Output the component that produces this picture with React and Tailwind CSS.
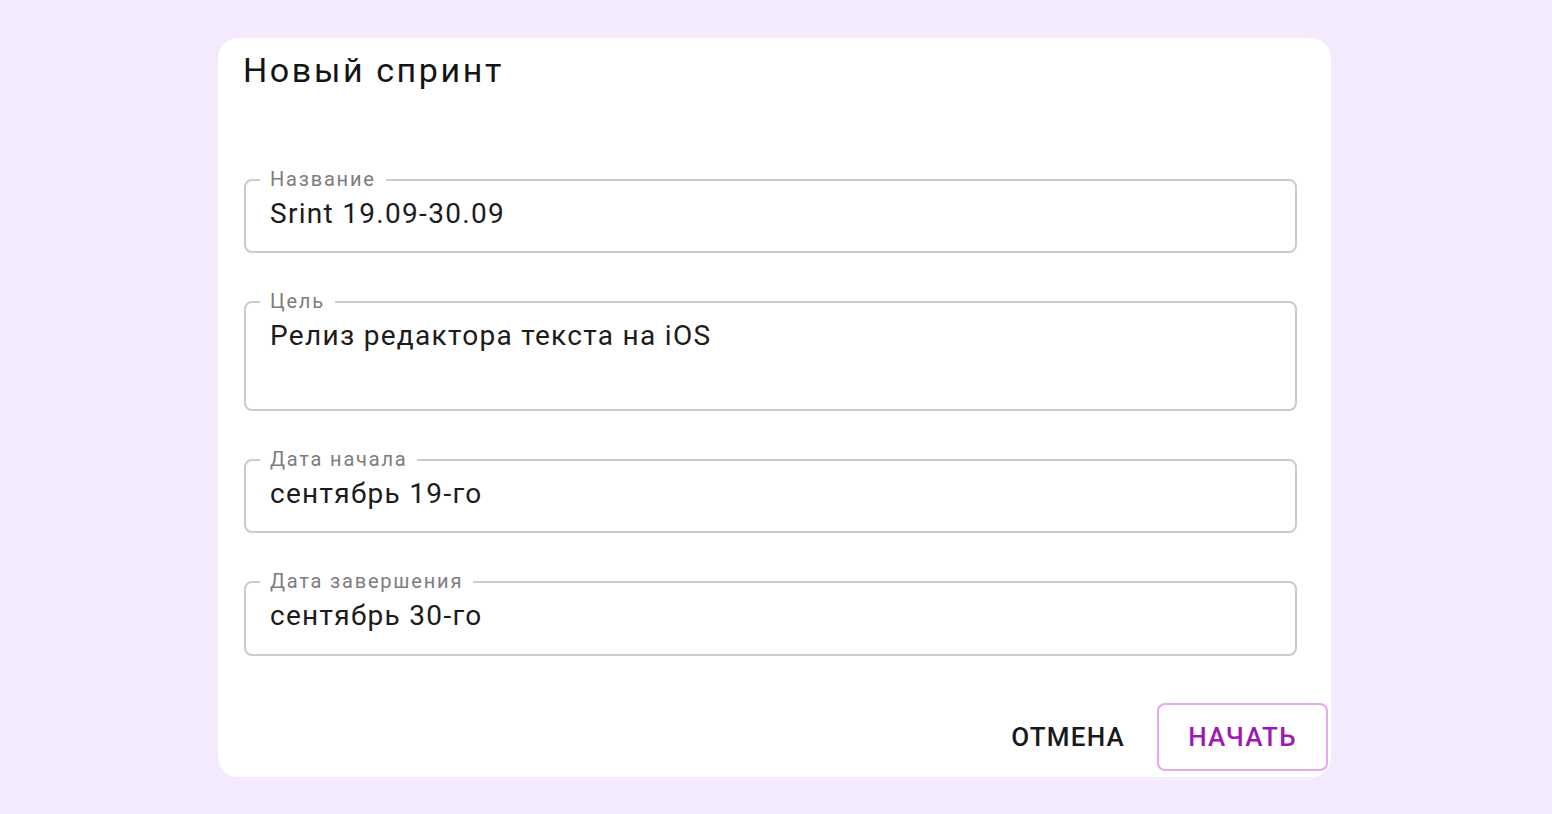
import React from "react";

function Field({ label, value, h = "h-[74px]" }) {
  return (
    <div className={`relative w-[1053px] ${h} rounded-[8px] border-2 border-[#cbcbcb] pl-[24px] pt-[16px]`}>
      <span className="absolute left-[14px] top-[-16px] bg-white px-[10px] text-[20px] leading-[28px] tracking-[1.8px] text-[#7d7d7d]">
        {label}
      </span>
      <div className="text-[28px] leading-[34px] tracking-[1.3px] text-[#1c1c1c]">{value}</div>
    </div>
  );
}

export default function App() {
  return (
    <div
      className="min-h-[814px] w-full bg-[#f4eafd] pt-[38px] pl-[218px]"
      style={{ fontFamily: "Roboto, 'Noto Sans', sans-serif" }}
    >
      <div className="flex h-[739px] w-[1113px] flex-col rounded-[20px] bg-white pt-[12px] pl-[26px] pb-[6px] pr-[3px]">
        <h1 className="ml-[-1px] text-[34px] leading-[40px] tracking-[2.6px] text-[#141414]">Новый спринт</h1>
        <div className="mt-[89px] flex flex-col gap-[48px]">
          <Field label="Название" value="Srint 19.09-30.09" />
          <Field label="Цель" value="Релиз редактора текста на iOS" h="h-[110px]" />
          <Field label="Дата начала" value="сентябрь 19-го" />
          <Field label="Дата завершения" value="сентябрь 30-го" h="h-[75px]" />
        </div>
        <div className="mt-auto flex items-center justify-end">
          <button className="mr-[32px] text-[26px] font-medium uppercase tracking-[1.2px] text-[#1a1a1a]">
            Отмена
          </button>
          <button className="flex h-[68px] w-[171px] items-center justify-center rounded-[8px] border-2 border-[#e6a8ee] text-[26px] font-medium uppercase tracking-[1.2px] text-[#a018b4]">
            Начать
          </button>
        </div>
      </div>
    </div>
  );
}
